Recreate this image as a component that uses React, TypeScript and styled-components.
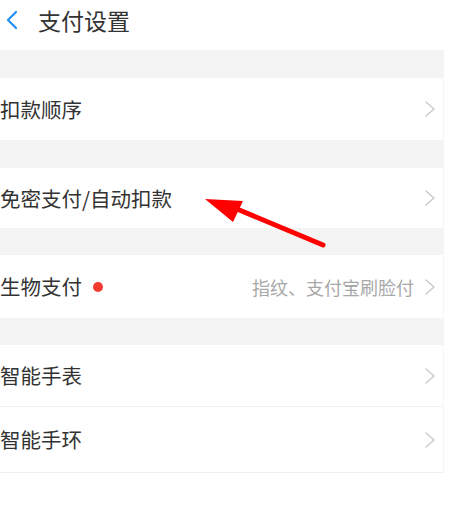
import React from "react";
import styled, { createGlobalStyle } from "styled-components";

const Global = createGlobalStyle`
  html, body { margin: 0; padding: 0; background: #fff; }
  body { font-family: "Noto Sans CJK SC", "Noto Sans", sans-serif; }
`;

const Page = styled.div`
  position: relative;
  width: 450px;
  height: 519px;
  background: #fff;
  overflow: hidden;
`;

const Content = styled.div`
  width: 444px;
  display: flex;
  flex-direction: column;
`;

const Header = styled.div`
  height: 50px;
  display: flex;
  align-items: center;
  gap: 19px;
  padding-left: 5px;
  box-sizing: border-box;
`;

const Title = styled.div`
  font-size: 23px;
  color: #333;
  line-height: 1;
  margin-top: -10px;
`;

const BackIcon = styled.svg`
  width: 14px;
  height: 22px;
  margin-top: -10px;
`;

const Gap = styled.div<{ $h: number }>`
  height: ${(p) => p.$h}px;
  background: #f4f4f4;
`;

const Row = styled.div<{ $h: number; $line?: boolean }>`
  height: ${(p) => p.$h}px;
  display: flex;
  align-items: center;
  box-sizing: border-box;
  padding-right: 7px;
  border-bottom: ${(p) => (p.$line ? "1px solid #f0f0f0" : "none")};
  border-right: 1px solid #f6f6f6;
`;

const Label = styled.div`
  font-size: 20.5px;
  color: #333;
  line-height: 1;
`;

const Dot = styled.span`
  width: 10px;
  height: 10px;
  border-radius: 50%;
  background: #f23a2e;
  margin-left: 11px;
`;

const Spacer = styled.div`
  flex: 1;
`;

const Value = styled.div`
  font-size: 18px;
  color: #a8a8a8;
  margin-right: 10px;
  line-height: 1;
`;

const Chevron = styled.svg`
  width: 12px;
  height: 20px;
`;

const Arrow = styled.svg`
  position: absolute;
  left: 195px;
  top: 190px;
  width: 140px;
  height: 62px;
`;

const ChevronIcon = () => (
  <Chevron viewBox="0 0 12 20">
    <path d="M2 3 L10 10 L2 17" fill="none" stroke="#c9c9c9" strokeWidth="1.4" strokeLinecap="round" strokeLinejoin="round" />
  </Chevron>
);

type Item = { label: string; h: number; dot?: boolean; value?: string; line?: boolean };

const groups: { gap: number; items: Item[] }[] = [
  { gap: 28, items: [{ label: "扣款顺序", h: 62 }] },
  { gap: 28, items: [{ label: "免密支付/自动扣款", h: 60 }] },
  { gap: 27, items: [{ label: "生物支付", h: 63, dot: true, value: "指纹、支付宝刷脸付" }] },
  {
    gap: 27,
    items: [
      { label: "智能手表", h: 62, line: true },
      { label: "智能手环", h: 66, line: true },
    ],
  },
];

export default function App() {
  return (
    <Page>
      <Global />
      <Content>
        <Header>
          <BackIcon viewBox="0 0 14 22">
            <path d="M11 3 L3 11 L11 19" fill="none" stroke="#1f8ff0" strokeWidth="2.2" strokeLinecap="round" strokeLinejoin="round" />
          </BackIcon>
          <Title>支付设置</Title>
        </Header>
        {groups.map((g, gi) => (
          <React.Fragment key={gi}>
            <Gap $h={g.gap} />
            {g.items.map((it) => (
              <Row key={it.label} $h={it.h} $line={it.line}>
                <Label>{it.label}</Label>
                {it.dot && <Dot />}
                <Spacer />
                {it.value && <Value>{it.value}</Value>}
                <ChevronIcon />
              </Row>
            ))}
          </React.Fragment>
        ))}
      </Content>
      <Arrow viewBox="0 0 140 62">
        <line x1="42" y1="19" x2="128" y2="55" stroke="#ff0000" strokeWidth="5" strokeLinecap="round" />
        <polygon points="10,9 48,11 38,32" fill="#ff0000" />
      </Arrow>
    </Page>
  );
}
